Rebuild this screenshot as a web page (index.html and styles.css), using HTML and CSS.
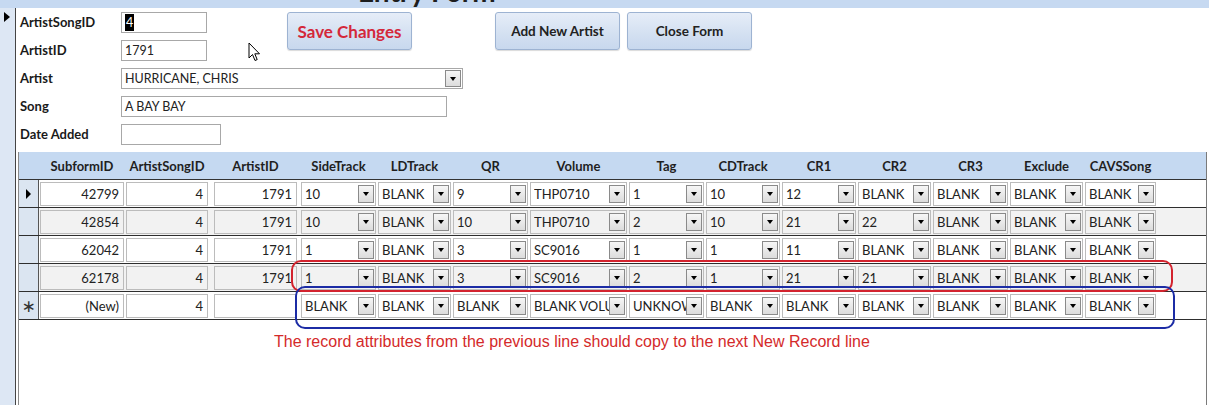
FILE: index.html
```html
<!DOCTYPE html>
<html lang="en">
  <head>
    <meta charset="UTF-8" />
    <title>Entry Form</title>
    <link rel="stylesheet" href="styles.css">
  </head>
  <body>
    <div class="strip"><h1>Entry Form</h1></div>
    <div class="main">
      <div class="rec"><div class="arrow"></div></div>
      <div class="detail">
        <div class="top">
          <label>ArtistSongID</label>
          <div class="tb w86"><span class="hl">4</span></div>
          <div class="buttons">
            <button class="btn save">Save Changes</button>
            <button class="btn add">Add New Artist</button>
            <button class="btn">Close Form</button>
          </div>
          <label>ArtistID</label>
          <div class="tb w86">1791</div>
          <label>Artist</label>
          <div class="cb wide artist"><span>HURRICANE, CHRIS</span><i></i></div>
          <label>Song</label>
          <div class="tb wide song">A BAY BAY</div>
          <label>Date Added</label>
          <div class="tb w100"></div>
        </div>

        <svg class="pointer" width="13" height="20" viewBox="0 0 13 20">
          <path d="M1 1 L1 16 L4.5 12.5 L7 18.5 L9.2 17.6 L6.8 11.8 L11.5 11.8 Z" fill="#fff" stroke="#000" stroke-width="1" stroke-linejoin="round"/>
        </svg>

        <div class="subform">
          <div class="head">
            <span></span><span>SubformID</span><span>ArtistSongID</span><span>ArtistID</span><span>SideTrack</span><span>LDTrack</span><span>QR</span><span>Volume</span><span>Tag</span><span>CDTrack</span><span>CR1</span><span>CR2</span><span>CR3</span><span>Exclude</span><span>CAVSSong</span>
          </div>

          <div class="row">
            <div class="sel"><b class="cur"></b></div>
            <div class="tb num">42799</div><div class="tb num">4</div><div class="tb num">1791</div>
            <div class="cb"><span>10</span><i></i></div>
            <div class="cb"><span>BLANK</span><i></i></div>
            <div class="cb"><span>9</span><i></i></div>
            <div class="cb"><span>THP0710</span><i></i></div>
            <div class="cb"><span>1</span><i></i></div>
            <div class="cb"><span>10</span><i></i></div>
            <div class="cb"><span>12</span><i></i></div>
            <div class="cb"><span>BLANK</span><i></i></div>
            <div class="cb"><span>BLANK</span><i></i></div>
            <div class="cb"><span>BLANK</span><i></i></div>
            <div class="cb"><span>BLANK</span><i></i></div>
          </div>

          <div class="row alt">
            <div class="sel"></div>
            <div class="tb num">42854</div><div class="tb num">4</div><div class="tb num">1791</div>
            <div class="cb"><span>10</span><i></i></div>
            <div class="cb"><span>BLANK</span><i></i></div>
            <div class="cb"><span>10</span><i></i></div>
            <div class="cb"><span>THP0710</span><i></i></div>
            <div class="cb"><span>2</span><i></i></div>
            <div class="cb"><span>10</span><i></i></div>
            <div class="cb"><span>21</span><i></i></div>
            <div class="cb"><span>22</span><i></i></div>
            <div class="cb"><span>BLANK</span><i></i></div>
            <div class="cb"><span>BLANK</span><i></i></div>
            <div class="cb"><span>BLANK</span><i></i></div>
          </div>

          <div class="row">
            <div class="sel"></div>
            <div class="tb num">62042</div><div class="tb num">4</div><div class="tb num">1791</div>
            <div class="cb"><span>1</span><i></i></div>
            <div class="cb"><span>BLANK</span><i></i></div>
            <div class="cb"><span>3</span><i></i></div>
            <div class="cb"><span>SC9016</span><i></i></div>
            <div class="cb"><span>1</span><i></i></div>
            <div class="cb"><span>1</span><i></i></div>
            <div class="cb"><span>11</span><i></i></div>
            <div class="cb"><span>BLANK</span><i></i></div>
            <div class="cb"><span>BLANK</span><i></i></div>
            <div class="cb"><span>BLANK</span><i></i></div>
            <div class="cb"><span>BLANK</span><i></i></div>
          </div>

          <div class="row alt">
            <div class="sel"></div>
            <div class="tb num">62178</div><div class="tb num">4</div><div class="tb num">1791</div>
            <div class="cb"><span>1</span><i></i></div>
            <div class="cb"><span>BLANK</span><i></i></div>
            <div class="cb"><span>3</span><i></i></div>
            <div class="cb"><span>SC9016</span><i></i></div>
            <div class="cb"><span>2</span><i></i></div>
            <div class="cb"><span>1</span><i></i></div>
            <div class="cb"><span>21</span><i></i></div>
            <div class="cb"><span>21</span><i></i></div>
            <div class="cb"><span>BLANK</span><i></i></div>
            <div class="cb"><span>BLANK</span><i></i></div>
            <div class="cb"><span>BLANK</span><i></i></div>
          </div>

          <div class="row">
            <div class="sel"><b class="star">&#8727;</b></div>
            <div class="tb num">(New)</div><div class="tb num">4</div><div class="tb num"></div>
            <div class="cb"><span>BLANK</span><i></i></div>
            <div class="cb"><span>BLANK</span><i></i></div>
            <div class="cb"><span>BLANK</span><i></i></div>
            <div class="cb"><span>BLANK VOLUME</span><i></i></div>
            <div class="cb"><span>UNKNOWN</span><i></i></div>
            <div class="cb"><span>BLANK</span><i></i></div>
            <div class="cb"><span>BLANK</span><i></i></div>
            <div class="cb"><span>BLANK</span><i></i></div>
            <div class="cb"><span>BLANK</span><i></i></div>
            <div class="cb"><span>BLANK</span><i></i></div>
            <div class="cb"><span>BLANK</span><i></i></div>
          </div>

          <p class="note">The record attributes from the previous line should copy to the next New Record line</p>

          <div class="mark red"></div>
          <div class="mark blue"></div>
        </div>
      </div>
    </div>
  </body>
</html>
```

FILE: styles.css
```css
* {
  margin: 0;
  padding: 0;
  box-sizing: border-box;
}

body {
  width: 1209px;
  height: 405px;
  overflow: hidden;
  font-family: Lato, "Open Sans", sans-serif;
  font-size: 13px;
  color: #222;
  background: #fff;
}

/* form header, mostly scrolled away */
.strip {
  height: 8px;
  background: #c6d9f1;
  overflow: hidden;
}

.strip h1 {
  font-size: 28px;
  line-height: 28px;
  font-weight: 700;
  color: #1e1e1e;
  margin: -23px 0 0 358px;
}

.main {
  display: flex;
  height: 397px;
}

.rec {
  width: 16px;
  flex: none;
  background: #dde7f4;
  border-right: 1px solid #444;
  padding: 4px 0 0 4px;
}

.arrow {
  width: 0;
  height: 0;
  border-left: 6px solid #000;
  border-top: 5px solid transparent;
  border-bottom: 5px solid transparent;
}

.detail {
  flex: 1;
  display: flex;
  flex-direction: column;
  position: relative;
}

/* main fields */
.top {
  display: grid;
  grid-template-columns: 101px 166px 1fr;
  grid-auto-rows: 28px;
  padding: 4px 0 0 4px;
}

.top label {
  font-weight: 700;
  font-size: 13px;
  line-height: 21px;
  color: #1a1a1a;
}

.top .tb,
.top .cb {
  height: 21px;
  border: 1px solid #a8a8a8;
  line-height: 19px;
  padding: 0 3px;
  background: #fff;
  font-size: 12.5px;
}

.w86 { width: 86px; }
.w100 { width: 100px; grid-column: 2; }
.wide { grid-column: 2 / span 2; }
.artist { width: 342px; }
.song { width: 326px; }

.hl {
  display: inline-block;
  background: #000;
  color: #fff;
  height: 17px;
  line-height: 17px;
  padding: 0 1px;
  margin-top: 1px;
  vertical-align: top;
}

.buttons {
  grid-column: 3;
  grid-row: 1 / span 2;
  display: flex;
  align-items: flex-start;
}

.btn {
  width: 125px;
  height: 38px;
  border: 1px solid #9db3d2;
  border-radius: 3px;
  background: linear-gradient(#e6edf8, #d3e0f1 60%, #c8d8ee);
  box-shadow: 0 1px 1px rgba(0, 0, 0, 0.15);
  font-family: Lato, sans-serif;
  font-weight: 700;
  font-size: 13.5px;
  color: #222;
}

.btn.save {
  margin-right: 83px;
  font-size: 17px;
  color: #d4283a;
}

.btn.add {
  margin-right: 7px;
}

.pointer {
  position: absolute;
  left: 232px;
  top: 34px;
}

/* subform datasheet */
.subform {
  flex: 1;
  position: relative;
  margin: 0 2px 0 2px;
  border-left: 1px solid #8a8a8a;
  border-right: 1px solid #7a7a7a;
  --cols: 21px 86px 88px 87px 77px 75px 77px 99px 77px 76px 76px 75px 77px 75px 73px 1fr;
}

.head {
  display: grid;
  grid-template-columns: var(--cols);
  height: 28px;
  background: #c5d9f1;
  border-bottom: 1px solid #333;
  align-items: center;
  text-align: center;
  font-weight: 700;
  font-size: 13px;
  color: #1f1f1f;
}

.row {
  display: grid;
  grid-template-columns: var(--cols);
  height: 28px;
  border-bottom: 1px solid #2e2e2e;
  align-items: start;
  background: #fff;
}

.row.alt {
  background: #f2f2f2;
}

.row > *,
.head > * {
  margin-right: 2px;
}

.row > :nth-child(3),
.head > :nth-child(3) {
  margin-right: 6px;
}

.row > :nth-child(4),
.head > :nth-child(4) {
  margin-right: 4px;
}

.sel {
  align-self: stretch;
  background: #dbe5f1;
  border-right: 1px solid #555;
  margin-right: 1px;
  display: flex;
  align-items: center;
  justify-content: center;
}

.cur {
  width: 0;
  height: 0;
  border-left: 5px solid #000;
  border-top: 5px solid transparent;
  border-bottom: 5px solid transparent;
}

.star {
  font-family: "DejaVu Sans", sans-serif;
  font-weight: 400;
  font-size: 17px;
  color: #333;
}

.row .tb,
.row .cb {
  height: 24px;
  margin-top: 2px;
  border: 1px solid #bcbcbc;
  background: #fff;
  line-height: 22px;
  white-space: nowrap;
  overflow: hidden;
  color: #222;
}

.row.alt .tb,
.row.alt .cb {
  background: #f2f2f2;
}

.tb {
  padding: 0 3px;
}

.tb.num {
  text-align: right;
  padding-right: 4px;
}

.cb {
  display: flex;
  align-items: center;
  padding: 0 1px 0 3px;
}

.cb span {
  flex: 1;
  overflow: hidden;
  white-space: nowrap;
}

.cb i {
  flex: none;
  width: 16px;
  height: 18px;
  border: 1px solid #8a8a8a;
  background: linear-gradient(#f6f6f6, #dcdcdc);
  display: flex;
  align-items: center;
  justify-content: center;
}

.cb i::after {
  content: "";
  border-top: 4px solid #000;
  border-left: 3px solid transparent;
  border-right: 3px solid transparent;
}

.top .cb {
  display: flex;
  padding: 0 1px 0 3px;
}

.top .cb i {
  height: 17px;
}

.note {
  margin-top: 13px;
  padding-left: 255px;
  font-family: "Liberation Sans", Arial, sans-serif;
  font-size: 16px;
  line-height: 18px;
  color: #d42a2a;
}

/* hand-drawn highlight boxes */
.mark {
  position: absolute;
  border: 2px solid;
  border-radius: 10px;
}

.mark.red {
  left: 272px;
  top: 108px;
  width: 882px;
  height: 32px;
  border-color: #d3232e;
}

.mark.blue {
  left: 276px;
  top: 134px;
  width: 880px;
  height: 43px;
  border-color: #1c2ca5;
}
```
